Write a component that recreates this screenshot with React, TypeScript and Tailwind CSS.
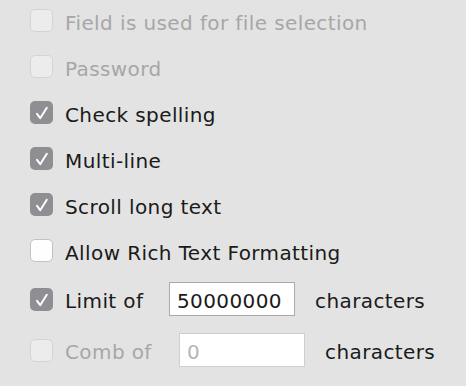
import React from "react";

function Box({ checked, disabled }: { checked?: boolean; disabled?: boolean }) {
  if (checked) {
    return (
      <div className="w-[23px] h-[23px] rounded-[5px] bg-[#8f8e93] shrink-0">
        <svg width="23" height="23" viewBox="0 0 23 23">
          <path d="M7 12.8 L10.2 17.2 L16.8 6.8" fill="none" stroke="#ffffff" strokeWidth="2" strokeLinecap="round" strokeLinejoin="round" />
        </svg>
      </div>
    );
  }
  return (
    <div
      className={
        disabled
          ? "w-[23px] h-[23px] rounded-[5px] bg-[#ececec] border border-[#d4d4d4] shrink-0"
          : "w-[23px] h-[23px] rounded-[5px] bg-[#fefefe] border border-[#c2c2c2] shrink-0"
      }
    />
  );
}

function Row({ label, checked, disabled }: { label: string; checked?: boolean; disabled?: boolean }) {
  return (
    <div className="flex items-center h-[23px] gap-[12px]">
      <Box checked={checked} disabled={disabled} />
      <span className={disabled ? "mt-[4px] text-[#a7a7a7]" : "mt-[4px] text-[#1a1a1a]"}>{label}</span>
    </div>
  );
}

export default function App() {
  return (
    <div className="w-[466px] h-[386px] bg-[#e3e3e3] pl-[30px] pt-[9px] flex flex-col text-[20px] leading-none tracking-[0.4px] font-['DejaVu_Sans',sans-serif]">
      <div className="flex flex-col gap-[23px]">
        <Row label="Field is used for file selection" disabled />
        <Row label="Password" disabled />
        <Row label="Check spelling" checked />
        <Row label="Multi-line" checked />
        <Row label="Scroll long text" checked />
        <Row label="Allow Rich Text Formatting" />
      </div>
      <div className="flex items-center h-[34px] mt-[20px]">
        <Box checked />
        <span className="ml-[12px] mt-[4px] text-[#1a1a1a] w-[104px]">Limit of</span>
        <div className="w-[126px] h-[34px] bg-white border border-[#a9a9a9] flex items-center pl-[7px] pt-[4px] text-[#1a1a1a]">
          50000000
        </div>
        <span className="ml-[20px] mt-[4px] text-[#1a1a1a]">characters</span>
      </div>
      <div className="flex items-center h-[34px] mt-[17px]">
        <Box disabled />
        <span className="ml-[12px] mt-[4px] text-[#a7a7a7] w-[114px]">Comb of</span>
        <div className="w-[126px] h-[34px] bg-white border border-[#cfcfcf] flex items-center pl-[7px] pt-[4px] text-[#b5b5b5]">
          0
        </div>
        <span className="ml-[20px] mt-[4px] text-[#1a1a1a]">characters</span>
      </div>
    </div>
  );
}
